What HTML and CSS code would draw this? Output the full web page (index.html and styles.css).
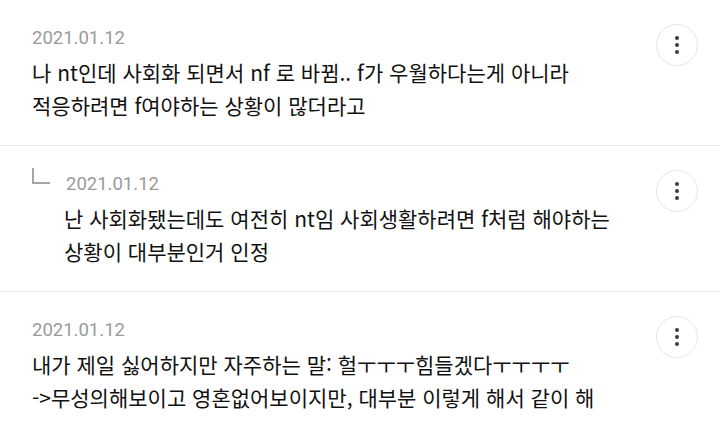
FILE: index.html
```html
<!DOCTYPE html>
<html lang="ko">
<head>
    <meta charset="UTF-8">
    <meta name="viewport" content="width=device-width, initial-scale=1.0">
    <title>댓글</title>
    <link rel="stylesheet" href="styles.css">
</head>
<body>
    <div class="comment-list">
        <div class="comment">
            <div class="comment-body">
                <div class="comment-date">2021.01.12</div>
                <div class="comment-text">나 nt인데 사회화 되면서 nf 로 바뀜.. f가 우월하다는게 아니라<br>적응하려면 f여야하는 상황이 많더라고</div>
            </div>
            <button class="more-btn" aria-label="더보기"><span class="dot"></span><span class="dot"></span><span class="dot"></span></button>
        </div>
        <div class="comment reply">
            <span class="reply-mark"></span>
            <div class="comment-body">
                <div class="comment-date">2021.01.12</div>
                <div class="comment-text reply-text">난 사회화됐는데도 여전히 nt임 사회생활하려면 f처럼 해야하는<br>상황이 대부분인거 인정</div>
            </div>
            <button class="more-btn" aria-label="더보기"><span class="dot"></span><span class="dot"></span><span class="dot"></span></button>
        </div>
        <div class="comment">
            <div class="comment-body">
                <div class="comment-date">2021.01.12</div>
                <div class="comment-text">내가 제일 싫어하지만 자주하는 말: 헐ㅜㅜㅜ힘들겠다ㅜㅜㅜㅜ<br>-&gt;무성의해보이고 영혼없어보이지만, 대부분 이렇게 해서 같이 해</div>
            </div>
            <button class="more-btn" aria-label="더보기"><span class="dot"></span><span class="dot"></span><span class="dot"></span></button>
        </div>
    </div>
</body>
</html>
```

FILE: styles.css
```css
body {
    margin: 0;
    background-color: #ffffff;
    font-family: Roboto, "Noto Sans CJK KR", sans-serif;
}
.comment-list {
    width: 720px;
}
.comment {
    display: flex;
    align-items: flex-start;
    padding: 24px 22px 21px 32px;
    border-bottom: 1px solid #e8e8e8; /* thin row divider */
    height: 100px;
}
.comment-body {
    flex: 1;
}
.comment-date {
    font-size: 18.5px;
    line-height: 28px;
    color: #9a9a9a;
}
.comment-text {
    margin-top: 4px;
    font-family: "Noto Sans CJK KR", sans-serif;
    font-size: 21px;
    line-height: 33px;
    color: #111111;
    white-space: nowrap;
}
.reply .comment-date {
    margin-left: 2px;
}
.reply-mark {
    flex-shrink: 0;
    width: 18px;
    height: 16px;
    margin-top: -2px;
    margin-right: 14px;
    border-left: 2px solid #a6a6a6;
    border-bottom: 2px solid #a6a6a6;
    box-sizing: border-box;
}
.more-btn {
    flex-shrink: 0;
    width: 42px;
    height: 42px;
    border: 1px solid #e6e6e6;
    border-radius: 50%;
    background: #ffffff;
    padding: 0;
    display: flex;
    flex-direction: column;
    align-items: center;
    justify-content: center;
    gap: 3px;
}
.dot {
    width: 4px;
    height: 4px;
    border-radius: 50%;
    background-color: #3c3c3c;
}
```
